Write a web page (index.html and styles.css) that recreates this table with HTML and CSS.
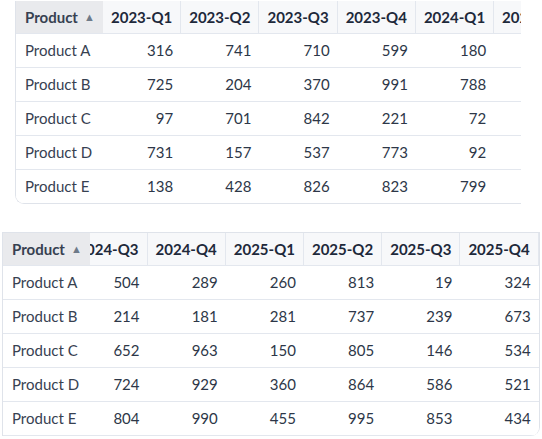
FILE: index.html
```html
<!DOCTYPE html>
<html lang="en">
<head>
    <meta charset="UTF-8">
    <meta name="viewport" content="width=device-width, initial-scale=1.0">
    <title>Quarterly Sales Table</title>
    <link rel="stylesheet" href="styles.css">
</head>
<body>
    <div class="table-wrap top-wrap">
        <table class="data-table" id="table-top"></table>
    </div>

    <div class="table-wrap bottom-wrap" id="bottom-wrap">
        <table class="data-table" id="table-bottom"></table>
    </div>

    <script src="script.js"></script>
</body>
</html>
```

FILE: styles.css
```css
body {
    font-family: Lato, "Noto Sans", sans-serif;
    margin: 0;
    padding: 1px 0 0 0;
    color: #334155;
}
.table-wrap {
    overflow-x: auto;
    scrollbar-width: none;
    background: #fff;
}
.table-wrap::-webkit-scrollbar {
    display: none;
}
.top-wrap {
    margin-left: 15px;
    width: 505px;
    border-left: 1px solid #dfe3ea;
    border-bottom: 1px solid #dfe3ea;
    border-bottom-left-radius: 9px;
}
.bottom-wrap {
    margin: 28px 0 0 2px;
    width: 536px;
    border: 1px solid #dfe3ea;
    border-bottom: none;
    border-bottom-right-radius: 9px;
}
.data-table {
    border-collapse: separate;
    border-spacing: 0;
    font-size: 15px;
    white-space: nowrap;
}
.data-table th {
    background: #f7f8fa;
    color: #1e293b;
    font-weight: 700;
    text-align: left;
    padding: 6px 8px;
    line-height: 19px;
    border-right: 1px solid #e3e7ee;
    border-bottom: 1px solid #e3e7ee;
}
.data-table td {
    padding: 7px 8px;
    line-height: 19px;
    text-align: right;
    color: #2d3748;
    border-bottom: 1px solid #e3e7ee;
}
.top-wrap tr:last-child td {
    border-bottom: none;
}
.data-table .name {
    position: sticky;
    left: 0;
    z-index: 1;
    text-align: left;
    background: #fff;
    color: #374151;
    padding-left: 9px;
    min-width: 70px;
}
.data-table th.name {
    background: #e9eaed;
    border-right: none;
}
.sort-arrow {
    display: inline-block;
    margin-left: 6px;
    font-size: 11px;
    color: #6e7a89;
    vertical-align: 2px;
}
```

FILE: script.js
```js
const quarters = ['2023-Q1', '2023-Q2', '2023-Q3', '2023-Q4', '2024-Q1', '2024-Q2',
    '2024-Q3', '2024-Q4', '2025-Q1', '2025-Q2', '2025-Q3', '2025-Q4'];

const rows = [
    ['Product A', [316, 741, 710, 599, 180, 412, 504, 289, 260, 813, 19, 324]],
    ['Product B', [725, 204, 370, 991, 788, 566, 214, 181, 281, 737, 239, 673]],
    ['Product C', [97, 701, 842, 221, 72, 318, 652, 963, 150, 805, 146, 534]],
    ['Product D', [731, 157, 537, 773, 92, 647, 724, 929, 360, 864, 586, 521]],
    ['Product E', [138, 428, 826, 823, 799, 205, 804, 990, 455, 995, 853, 434]]
];

function buildTable(table) {
    let html = '<thead><tr><th class="name">Product<span class="sort-arrow">&#9650;</span></th>';
    quarters.forEach(q => {
        html += `<th>${q}</th>`;
    });
    html += '</tr></thead><tbody>';
    rows.forEach(([name, values]) => {
        html += `<tr><td class="name">${name}</td>`;
        values.forEach(v => {
            html += `<td>${v}</td>`;
        });
        html += '</tr>';
    });
    html += '</tbody>';
    table.innerHTML = html;
}

buildTable(document.getElementById('table-top'));
buildTable(document.getElementById('table-bottom'));

// second view is scrolled all the way right
const bottomWrap = document.getElementById('bottom-wrap');
bottomWrap.scrollLeft = bottomWrap.scrollWidth;
```
